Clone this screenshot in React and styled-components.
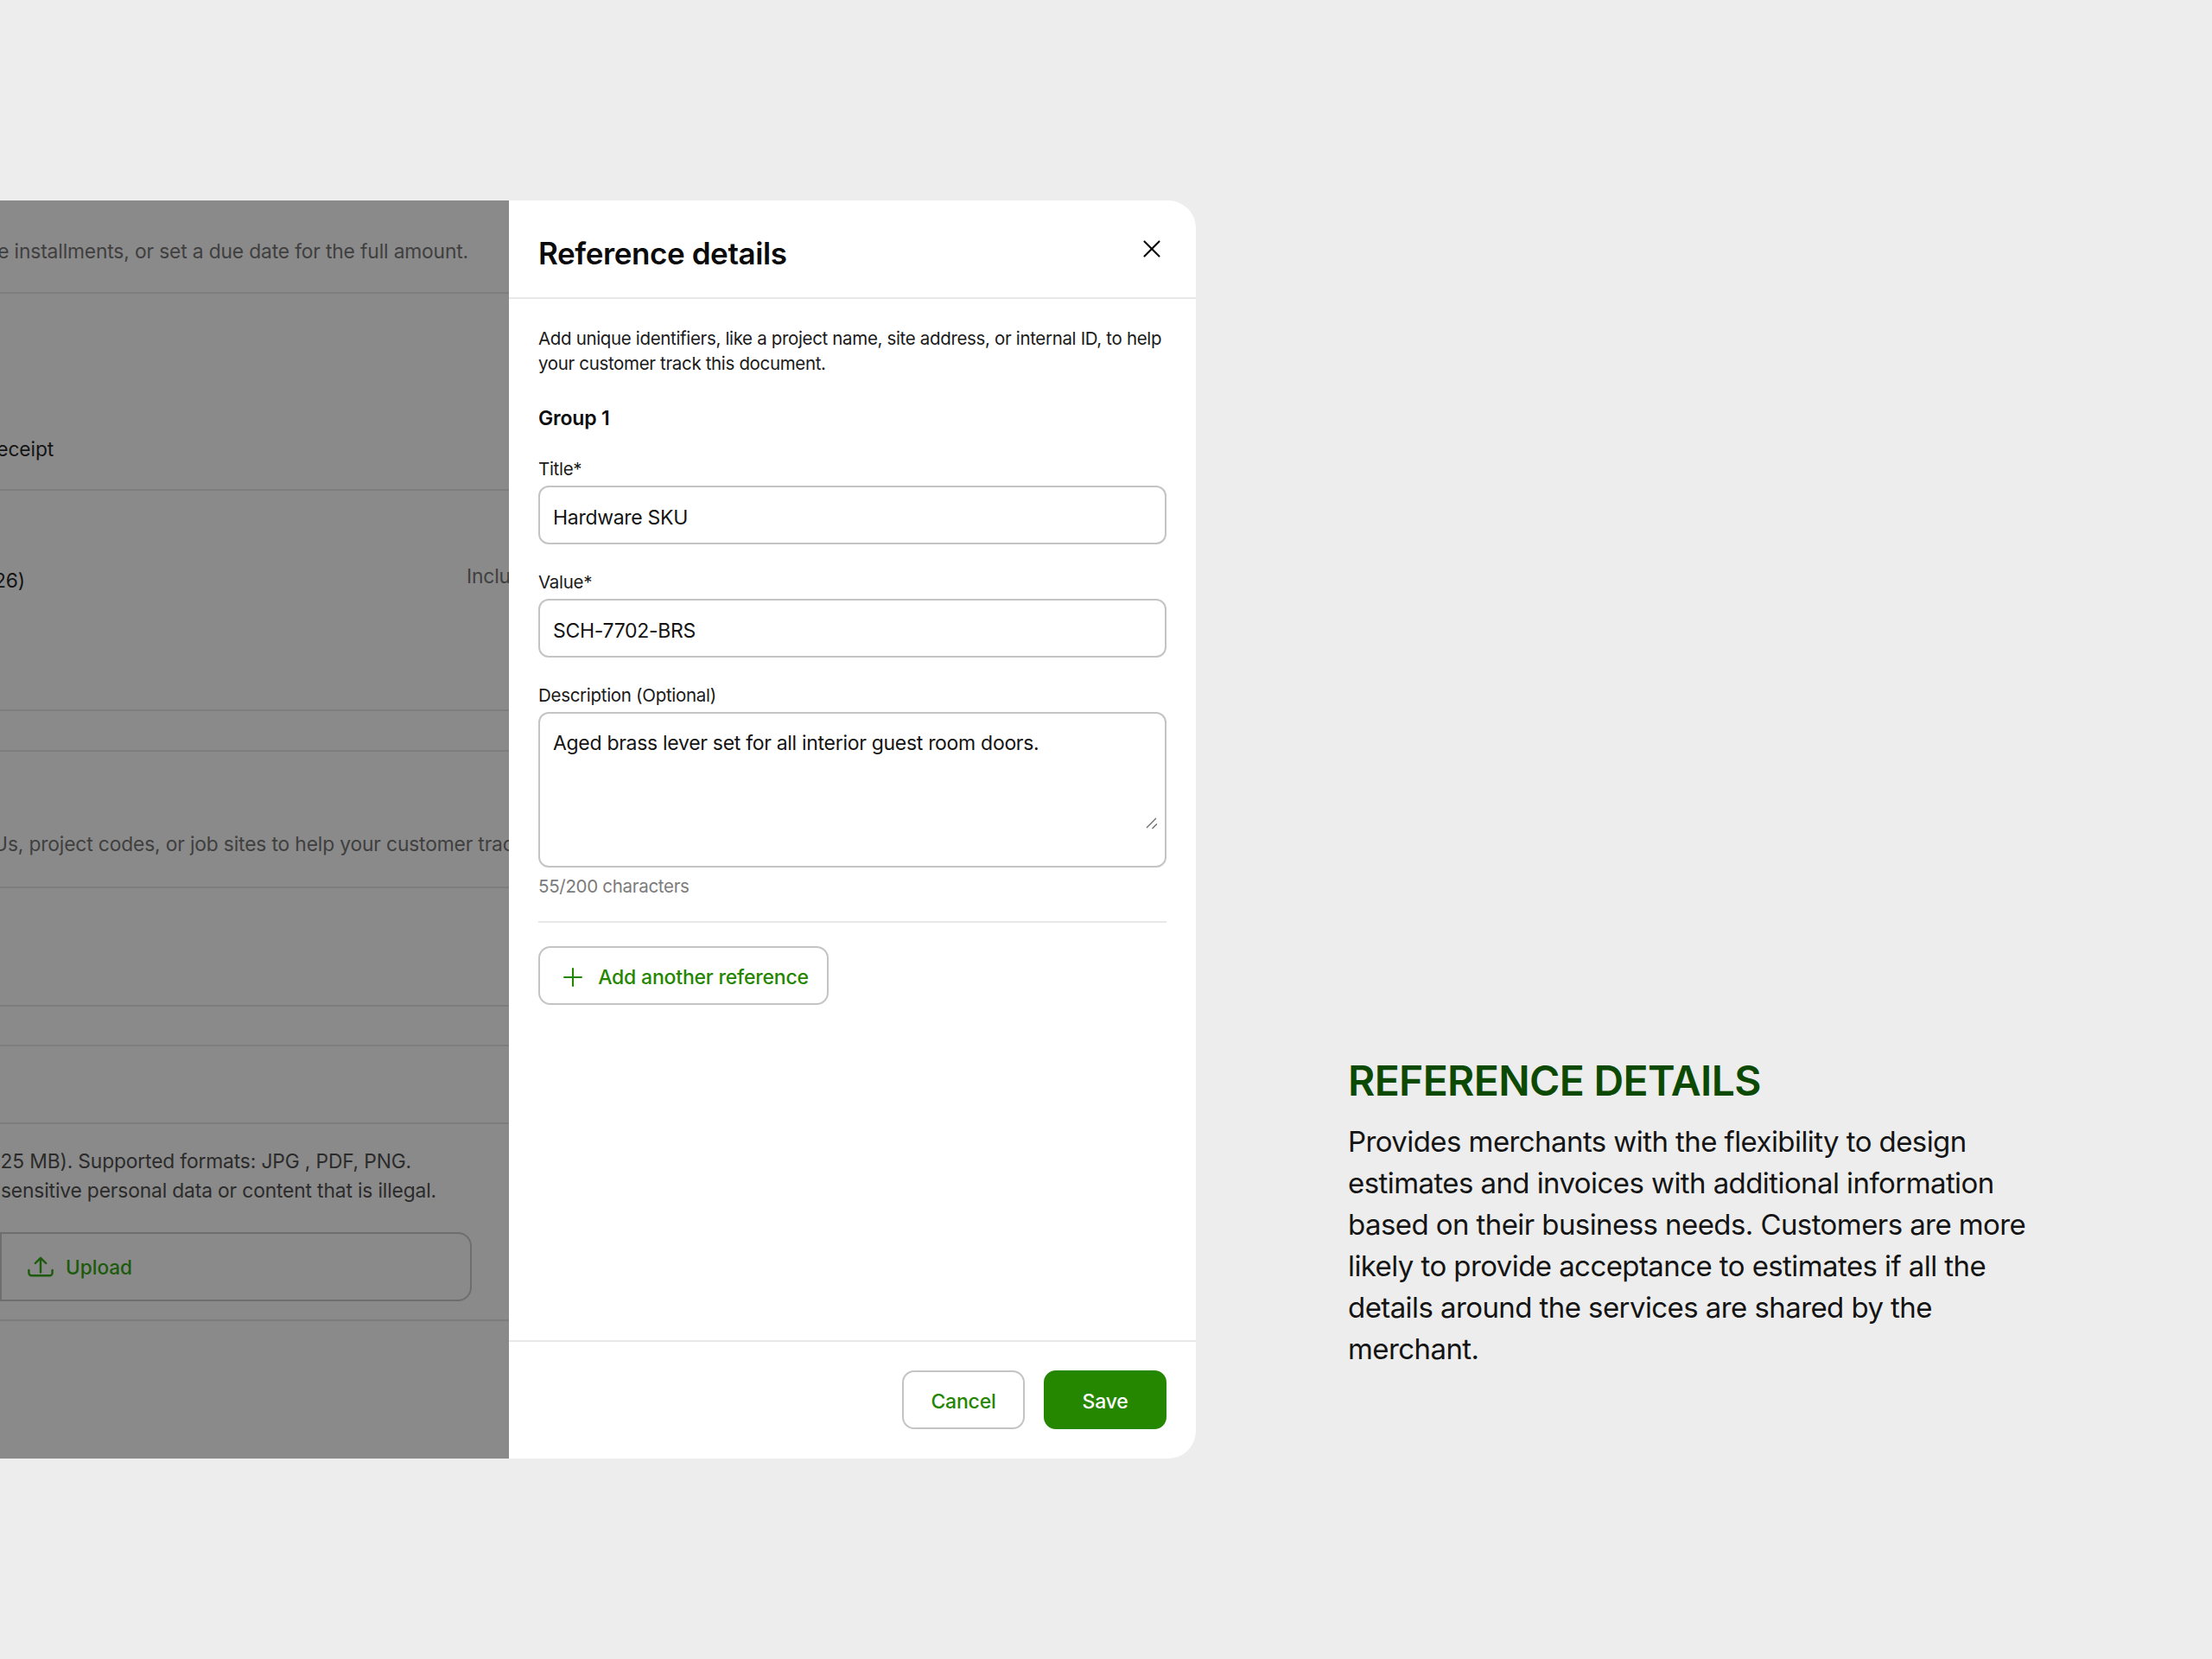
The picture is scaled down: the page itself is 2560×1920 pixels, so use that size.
import React from "react";
import styled, { createGlobalStyle } from "styled-components";
import { X, Plus } from "lucide-react";

const GlobalStyle = createGlobalStyle`
  html, body {
    margin: 0;
    padding: 0;
    background: #ededed;
  }
  body {
    font-family: Inter, "Liberation Sans", sans-serif;
    color: #0d0d0d;
  }
  * {
    box-sizing: border-box;
  }
`;

const Stage = styled.div`
  width: 2560px;
  height: 1920px;
  padding-top: 232px;
  display: flex;
  align-items: flex-start;
  background: #ededed;
  overflow: hidden;
`;

/* page behind the drawer, dimmed and cut off by the window */
const Backdrop = styled.div`
  width: 589px;
  height: 1456px;
  flex: none;
  background: #8a8a8a;
  overflow: hidden;
  display: flex;
  flex-direction: column;
`;

const Row = styled.div`
  height: ${(p) => p.$height}px;
  flex: none;
  padding-top: ${(p) => p.$top || 0}px;
  border-bottom: 2px solid ${(p) => (p.$last ? "transparent" : "#7d7d7d")};
  display: ${(p) => (p.$stack ? "block" : "flex")};
  align-items: flex-start;
`;

const Crop = styled.div`
  width: ${(p) => p.$width}px;
  flex: none;
  display: flex;
  justify-content: flex-end;
  white-space: nowrap;
`;

const BackText = styled.span`
  font-size: 22.8px;
  line-height: ${(p) => p.$line || 32}px;
  letter-spacing: -0.15px;
  color: ${(p) => p.$color || "#3f3f3f"};
  flex: none;
`;

const SpillText = styled(BackText)`
  margin: -5px 0 0 511px;
  white-space: nowrap;
`;

const UploadBox = styled.div`
  width: 546px;
  height: 80px;
  margin-top: 31px;
  border: 2px solid #6e6e6e;
  border-radius: 0 16px 16px 0;
  display: flex;
  align-items: center;
  padding-left: 30px;
  gap: 14px;
  color: #1c5a0c;
  font-size: 22.6px;
  font-weight: 500;
`;

const Drawer = styled.section`
  width: 795px;
  height: 1456px;
  flex: none;
  background: #fff;
  border-radius: 0 32px 32px 0;
  display: flex;
  flex-direction: column;
  overflow: hidden;
`;

const DrawerHead = styled.header`
  height: 114px;
  flex: none;
  border-bottom: 2px solid #e8e8e8;
  padding: 0 34px;
  display: flex;
  align-items: center;
  justify-content: space-between;
`;

const Title = styled.h2`
  margin: 10px 0 0;
  font-size: 35px;
  line-height: 44px;
  font-weight: 600;
  letter-spacing: -0.4px;
  color: #0a0a0a;
`;

const Close = styled.button`
  width: 34px;
  height: 34px;
  padding: 0;
  border: 0;
  background: none;
  display: flex;
  align-items: center;
  justify-content: center;
  color: #0a0a0a;
`;

const DrawerBody = styled.div`
  flex: 1;
  padding: 32px 34px 0;
`;

const Intro = styled.p`
  margin: 0;
  font-size: 20.5px;
  line-height: 28.5px;
  letter-spacing: -0.34px;
  color: #1a1a1a;
`;

const GroupName = styled.h3`
  margin: 33px 0 0;
  font-size: 23px;
  line-height: 32px;
  font-weight: 600;
  letter-spacing: -0.2px;
`;

const Field = styled.div`
  margin-top: ${(p) => p.$top || 30}px;
`;

const Label = styled.label`
  display: block;
  font-size: 20.5px;
  line-height: 28px;
  margin-bottom: 5px;
  letter-spacing: -0.3px;
  color: #1a1a1a;
`;

const TextBox = styled.div`
  position: relative;
  height: ${(p) => p.$height || 68}px;
  border: 2px solid #c4c4c4;
  border-radius: 12px;
  padding: ${(p) => (p.$height ? "19px" : "20px")} 15px 0;
  font-size: 23px;
  line-height: 30px;
  letter-spacing: -0.3px;
  color: #141414;
`;

const Resizer = styled.svg`
  position: absolute;
  right: 8px;
  bottom: 42px;
`;

const Counter = styled.div`
  margin-top: 8px;
  font-size: 20.5px;
  line-height: 28px;
  letter-spacing: -0.3px;
  color: #7b7b7b;
`;

const Rule = styled.hr`
  margin: 26px 0 27px;
  border: 0;
  border-top: 2px solid #e8e8e8;
`;

const OutlineButton = styled.button`
  height: 68px;
  padding: 4px 0 0;
  border: 2px solid #c4c4c4;
  border-radius: 14px;
  background: #fff;
  font-family: inherit;
  font-size: 23px;
  font-weight: 500;
  letter-spacing: -0.2px;
  color: #248600;
  display: flex;
  align-items: center;
  justify-content: center;
`;

const AddButton = styled(OutlineButton)`
  width: 336px;
  gap: 12px;
`;

const DrawerFoot = styled.footer`
  height: 137px;
  flex: none;
  border-top: 2px solid #e8e8e8;
  padding: 33px 34px 0;
  display: flex;
  justify-content: flex-end;
  gap: 22px;
`;

const CancelButton = styled(OutlineButton)`
  width: 142px;
`;

const SaveButton = styled(OutlineButton)`
  width: 142px;
  background: #258700;
  border-color: #258700;
  color: #fff;
`;

const Note = styled.aside`
  width: 800px;
  margin: 990px 0 0 176px;
  flex: none;
`;

const NoteTitle = styled.h1`
  margin: 0;
  font-size: 48px;
  line-height: 58px;
  font-weight: 600;
  letter-spacing: -0.65px;
  color: #0c4a04;
`;

const NoteText = styled.p`
  margin: 17px 0 0;
  width: 790px;
  font-size: 33px;
  line-height: 48px;
  letter-spacing: -0.58px;
  color: #141414;
`;

const UploadIcon = () => (
  <svg width="30" height="24" viewBox="0 0 30 24" fill="none" stroke="currentColor" strokeWidth="2.4" strokeLinecap="round" strokeLinejoin="round">
    <path d="M15 18.5V2M8.8 8 15 1.8 21.2 8" />
    <path d="M1.4 16v3.2a3 3 0 0 0 3 3h21.2a3 3 0 0 0 3-3V16" />
  </svg>
);

export default function App() {
  return (
    <>
      <GlobalStyle />
      <Stage>
        <Backdrop>
          <Row $height={108} $top={43}>
            <Crop $width={542}>
              <BackText>Create installments, or set a due date for the full amount.</BackText>
            </Crop>
          </Row>
          <Row $height={228} $top={164}>
            <Crop $width={62}>
              <BackText $color="#141414">Deposit receipt</BackText>
            </Crop>
          </Row>
          <Row $height={255} $top={88}>
            <Crop $width={29}>
              <BackText $color="#141414">(Mar 2026)</BackText>
            </Crop>
            <SpillText>Inclu</SpillText>
          </Row>
          <Row $height={47} />
          <Row $height={158} $top={91}>
            <Crop $width={607}>
              <BackText>Add POs, SKUs, project codes, or job sites to help your customer track</BackText>
            </Crop>
          </Row>
          <Row $height={137} />
          <Row $height={46} />
          <Row $height={90} />
          <Row $height={228} $top={26} $stack>
            <Crop $width={476}>
              <BackText $color="#2b2b2b" $line={34}>Attach files (max size: 25 MB). Supported formats: JPG , PDF, PNG.</BackText>
            </Crop>
            <Crop $width={505}>
              <BackText $color="#2b2b2b" $line={34}>Do not upload sensitive personal data or content that is illegal.</BackText>
            </Crop>
            <UploadBox>
              <UploadIcon />
              Upload
            </UploadBox>
          </Row>
          <Row $height={160} $last />
        </Backdrop>
        <Drawer>
          <DrawerHead>
            <Title>Reference details</Title>
            <Close aria-label="Close">
              <X size={34} strokeWidth={1.5} />
            </Close>
          </DrawerHead>
          <DrawerBody>
            <Intro>
              Add unique identifiers, like a project name, site address, or internal ID, to help your customer track this document.
            </Intro>
            <GroupName>Group 1</GroupName>
            <Field $top={29}>
              <Label>Title*</Label>
              <TextBox>Hardware SKU</TextBox>
            </Field>
            <Field>
              <Label>Value*</Label>
              <TextBox>SCH-7702-BRS</TextBox>
            </Field>
            <Field>
              <Label>Description (Optional)</Label>
              <TextBox $height={180}>
                Aged brass lever set for all interior guest room doors.
                <Resizer width="14" height="15" viewBox="0 0 14 15" fill="none" stroke="#6f6f6f" strokeWidth="1.4">
                  <path d="M1 13 12 2M7.5 14l5.4-5.4" />
                </Resizer>
              </TextBox>
              <Counter>55/200 characters</Counter>
            </Field>
            <Rule />
            <AddButton>
              <Plus size={34} strokeWidth={1.5} />
              Add another reference
            </AddButton>
          </DrawerBody>
          <DrawerFoot>
            <CancelButton>Cancel</CancelButton>
            <SaveButton>Save</SaveButton>
          </DrawerFoot>
        </Drawer>
        <Note>
          <NoteTitle>REFERENCE DETAILS</NoteTitle>
          <NoteText>
            Provides merchants with the flexibility to design estimates and invoices with additional information based on their business needs. Customers are more likely to provide acceptance to estimates if all the details around the services are shared by the merchant.
          </NoteText>
        </Note>
      </Stage>
    </>
  );
}
